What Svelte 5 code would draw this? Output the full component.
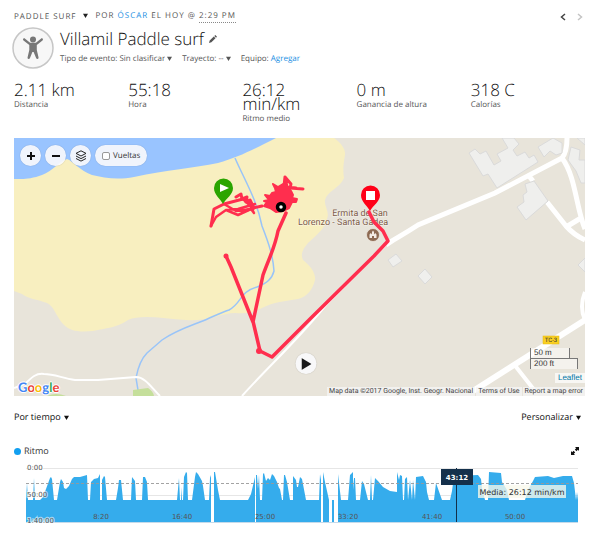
<script>
  const metrics = [
    { value: '2.11 km', label: 'Distancia' },
    { value: '55:18', label: 'Hora' },
    { value: '26:12 min/km', label: 'Ritmo medio' },
    { value: '0 m', label: 'Ganancia de altura' },
    { value: '318 C', label: 'Calorías' }
  ];
  const logo = [
    ['G', '#4285f4'], ['o', '#ea4335'], ['o', '#fbbc05'],
    ['g', '#4285f4'], ['l', '#34a853'], ['e', '#ea4335']
  ];
  const times = [
    ['8:20', 101], ['16:40', 182], ['25:00', 265],
    ['33:20', 348], ['41:40', 432], ['50:00', 515]
  ];
  const paces = [['0:00', 470], ['50:00', 497], ['1:40:00', 523]];

  // Pace samples as x,y pairs, one polygon for each stretch without a pause
  const stretches = [
    '26,500 27,483 28,500 33,500 34,478 35,500 40,500 43,497 46,489 50,478 51,477 52,479 54,500 57,500 60,482 61,479 63,482 64,488 66,489 69,486 72,479 74,477 80,477 87,475 88,500 90,500 91,482 94,479 98,478 100,474 100,500 102,500 102,480 104,476 105,477 107,500 116,500 118,488 119,480 121,480 123,500 131,500 132,477 135,481 136,500 142,500 143,477 145,477 147,482 148,500 177,500 179,478 180,500 181,500 181,487 182,500 183,500 184,477 186,472 187,473 188,500 192,500 195,477 196,472 198,474 202,481 203,486 205,500 209,500 210,478 211,475',
    '214,472 215,472 218,490 220,500 248,500 251,494 255,477',
    '256,475 257,475 258,489 259,475 260,500 262,500 263,474 264,473 266,481 268,478 270,480 272,474 274,476 277,482 279,488 280,489 282,500 283,500 284,475 285,475 287,482 290,500 293,500 293,476 296,480 297,487 298,487 300,477 302,479 306,500 319,500 320,474 321,480',
    '323,472 325,482 329,500',
    '332,500 334,500',
    '338,474 341,500 348,500 350,475 353,472 353,490 354,478 355,478 356,500 360,500 362,481 364,484 368,500 370,500 371,475 372,500 373,500 375,478 378,481 383,487 390,491 397,492 397,472 399,480 400,475 402,476 403,500 404,500 405,479 407,477 408,500 410,480 412,500 413,480 415,500 416,477 423,476 426,482 427,492 429,500 434,500 436,483 442,500 450,500 452,491 454,476 478,475 481,479 482,488 485,500 488,500 489,472 501,473 502,482 507,490 509,500 525,500 528,490 533,481 535,477 548,476 554,478 563,476 572,476 574,483 576,500 577,492 578,500'
  ].map((points) => {
    const list = points.split(' ');
    const first = list[0].split(',')[0];
    const last = list[list.length - 1].split(',')[0];
    return `${first},522 ${points} ${last},522`;
  });
</script>

{#snippet caret()}
  <svg class="caret" viewBox="0 0 6 6" aria-hidden="true"><path d="M0 1h6L3 6z" /></svg>
{/snippet}

<main>
  <div class="topline">
    <button class="sport">Paddle surf {@render caret()}</button>
    <span>por <a href="#oscar">Óscar</a> el hoy @ <button class="time">2:29 PM</button></span>
    <nav>
      <button aria-label="Anterior"><svg viewBox="0 0 6 8"><path d="M5 1 1.500 4 5 7" /></svg></button>
      <button class="off" aria-label="Siguiente"><svg viewBox="0 0 6 8"><path d="M1 1 4.500 4 1 7" /></svg></button>
    </nav>
  </div>

  <header>
    <svg class="avatar" viewBox="0 0 42 42" aria-hidden="true">
      <circle cx="21" cy="21" r="20" fill="#f7f7f7" stroke="#c6c6c6" stroke-width="1.500" />
      <g fill="#777">
        <circle cx="21" cy="12.500" r="3" />
        <path d="M11.300 11.800c.5-.7 1.300-.5 1.800-.1l5 4h5.800l5-4c.5-.4 1.300-.6 1.800.1s.2 1.300-.2 1.700L24.800 18v5l1.700 7.200c.2.900-.2 1.700-.9 1.800s-1.200-.3-1.500-1L21.600 25h-1.200L18 31c-.3.700-.8 1.100-1.500 1s-1.100-.9-.9-1.800l1.700-7.200v-5l-5.800-4.500c-.5-.4-.7-1-.2-1.700z" />
      </g>
    </svg>
    <div>
      <h1>
        Villamil Paddle surf
        <button aria-label="Editar nombre">
          <svg class="pencil" viewBox="0 0 8 8"><path d="M0 8 .7 5.600 4.800 1.500 6.500 3.200 2.400 7.300zM5.300 1 6.300 0 8 1.700 7 2.700z" /></svg>
        </button>
      </h1>
      <div class="details">
        <label>Tipo de evento: <select><option>Sin clasificar</option></select>{@render caret()}</label>
        <label>Trayecto: <select><option>--</option></select>{@render caret()}</label>
        <span>Equipo: <a href="#equipo">Agregar</a></span>
      </div>
    </div>
  </header>

  <dl class="metrics">
    {#each metrics as m}
      <div><dd>{m.value}</dd><dt>{m.label}</dt></div>
    {/each}
  </dl>

  <section class="map" aria-label="Mapa">
    <svg class="tiles" viewBox="14 138 571 258" preserveAspectRatio="xMidYMid slice">
      <rect x="14" y="138" width="571" height="258" fill="#e8e4da" />
      <path fill="#f8efc0" d="M14 138H334C340 142 346 149 345 155C343 166 343 172 344 178C340 188 327 191 325 200C324 206 330 212 327 219C325 228 318 234 308 243C301 251 301 256 303 260C311 266 316 274 315 280C313 289 307 297 298 299C285 301 274 302 262 308C253 313 246 314 235 313C222 313 205 322 186 320C165 319 142 314 128 320C116 328 106 328 93 331C80 332 71 332 63 324C56 316 54 306 47 303C36 299 29 299 22 294L14 291Z" />
      <path fill="#99c4ff" d="M14 138H276C254 149 239 157 218 163C194 168 167 170 134 177C118 180 104 178 92 175C79 170 73 161 67 159C58 162 53 171 42 175C34 178 26 179 22 179L14 179Z" />
      <path fill="none" stroke="#99c4f8" stroke-width="1.500" d="M235 158C245 181 257 200 262 226C269 244 273 256 274 271C272 279 267 283 257 287C239 292 242 303 229 310C219 313 211 318 200 322C187 327 175 331 162 340L147 353C139 361 137 373 136 378L139 396" />
      <path fill="#c5df9b" d="M133 390 148 388Q153 391 154 396H133zM47 396Q56 392 66 396z" />
      <g fill="none" stroke="#fff">
        <path stroke-width="2" d="M14 388 25 384C32 377 36 373 44 374C54 374 62 378 75 380H98L136 377C145 377 151 387 160 396" />
        <path stroke-width="2" d="M242 396C266 369 296 342 326 305L386 245" />
        <path stroke-width="5" d="M386 245C394 239 398 238 418 225L495 193 562 158Q567 152 567 138M562 158C576 177 576 208 585 229M529 176 533 181M547 202 566 226Q574 235 585 240M566 227 581 218" />
        <path stroke-width="6" d="M473 391 585 320" />
        <path stroke-width="4" d="M513 363 535 391M585 292Q579 307 585 320" />
      </g>
      <g fill="#efefed" stroke="#dadada" stroke-width="1">
        <path d="M469 153 475 149 480 154 486 151 494 165 501 161 497 154 508 148 502 138H514L519 144 513 150 517 156 525 152 529 158 534 155 538 162 497 188 488 174 483 176z" />
        <path d="M538 147 553 138 562 143V153L556 155 550 151 544 157z" />
        <path d="M571 147 580 150 579 160H585V183H581L576 171 568 160zM577 138H585V145z" />
        <path d="M525 184 534 181 548 201 526 220 517 207 524 202 523 195 527 192z" />
        <path d="M418 276 425 269 432 277 425 284zM388 260 396 254 402 261 393 267zM578 265 585 258V272z" />
      </g>
      <g class="place" text-anchor="middle">
        <text x="360" y="216">Ermita de San</text>
        <text x="343" y="225">Lorenzo - Santa Gadea</text>
      </g>
      <circle cx="373" cy="235" r="6.500" fill="#8d6a52" stroke="#efe8e0" stroke-width="0.800" />
      <path fill="#f4ece4" d="M369.500 238v-3.500l1.300-1.500 1.200 1.500V232l1-1.500 1 1.500v2.500l1.200-1.500 1.300 1.500v3.500h-2.500v-2h-2v2z" />
      <g fill="none" stroke="#ff2e4e" stroke-width="3.500" stroke-linejoin="round" stroke-linecap="round">
        <path d="M369 212 374 222 383 231 388 241 374 256 311 318 280 349 272 357 260 351" />
        <path d="M260 351 252 317M226 256 231 267 253 322 263 275C270 256 275 247 278 231L286 213" />
        <path d="M211 226 214 209 224 204 243 199 253 208 262 206" stroke-width="3" />
        <path d="M211 226 216 217 226 210 238 209 255 204M224 204 236 211 253 209M226 210 238 215 251 209 254 213 247 199" stroke-width="2.500" />
        <path d="M236 197 241 194 242 199 247 197 246 202 250 200 254 208 247 210" stroke-width="3" />
        <path d="M284 186 285 177 291 184 290 188 303 189M285 177 287 187 296 188" stroke-width="3" />
      </g>
      <path fill="#ff2e4e" stroke="#ff2e4e" stroke-width="2" stroke-linejoin="round" d="M273 184 278 187 283 184 289 188 291 191 293 195 292 198 297 199 296 202 292 202 289 208 283 211 276 212 270 208 264 206 267 202 264 201 269 200 265 195 270 196 272 193 276 192 275 188z" />
      <circle cx="226" cy="256" r="2.500" fill="#ff2e4e" />
      <circle cx="259" cy="351" r="3" fill="#ff2e4e" />
      <circle cx="281" cy="207" r="3.500" fill="#fff" stroke="#000" stroke-width="3.500" />
      <path fill="#2ba500" d="M223 204C220 198 214 195 214 188A9.500 9.500 0 0 1 233 188C233 195 226 198 223 204z" />
      <path fill="#fff" d="M220 184v8l9-4z" />
      <path fill="#ff0018" d="M370 211C367 205 361 202 361 195A9.500 9.500 0 0 1 380 195C380 202 373 205 370 211z" />
      <path fill="#fff" d="M366 191h9v9h-9z" />
      <rect x="543" y="336" width="16" height="8" fill="#f9cf22" stroke="#e5b90c" stroke-width="0.500" />
      <text class="road" x="551" y="342" text-anchor="middle">TC-3</text>
    </svg>

    <div class="tools">
      <button aria-label="Acercar"><svg viewBox="0 0 10 10"><path d="M5 1v8M1 5h8" stroke="#111" stroke-width="2" /></svg></button>
      <button aria-label="Alejar"><svg viewBox="0 0 10 10"><path d="M1 5h8" stroke="#111" stroke-width="2" /></svg></button>
      <button aria-label="Capas"><svg class="layers" viewBox="0 0 12 12" fill="none" stroke="#222" stroke-width="1"><path d="M6 .8 11 3.400 6 6 1 3.400zM1 6l5 2.600L11 6M1 8.500l5 2.600 5-2.600" /></svg></button>
      <label><input type="checkbox" />Vueltas</label>
    </div>
    <button class="play" aria-label="Reproducir"><svg viewBox="0 0 10 12"><path d="M0 0 10 6 0 12z" fill="#1a1a1a" /></svg></button>
    <span class="google">{#each logo as [letter, color]}<span style:color>{letter}</span>{/each}</span>
    <div class="corner">
      <div class="scale"><span>50 m</span><span>200 ft</span></div>
      <a class="leaflet" href="#leaflet">Leaflet</a>
      <div class="credits">
        <span>Map data ©2017 Google, Inst. Geogr. Nacional</span>
        <a href="#terms">Terms of Use</a>
        <a href="#report">Report a map error</a>
      </div>
    </div>
  </section>

  <div class="options">
    <label><select aria-label="Eje del gráfico"><option>Por tiempo</option></select>{@render caret()}</label>
    <button>Personalizar{@render caret()}</button>
  </div>

  <section>
    <div class="legend">
      <h2>Ritmo</h2>
      <button aria-label="Ampliar gráfico">
        <svg viewBox="0 0 8 8"><path d="M4 0h4v4L6.800 2.800 5.400 4.200 3.800 2.600 5.200 1.200zM4 8H0V4l1.200 1.200 1.400-1.400 1.600 1.600L2.800 6.800z" /></svg>
      </button>
    </div>
    <svg class="chart" viewBox="14 464 571 64" role="img" aria-label="Ritmo por tiempo">
      <path d="M26 468.500H578M26 495.500H578" stroke="#e6e6e6" />
      <g fill="#35acec">
        {#each stretches as points}<polygon {points} />{/each}
      </g>
      <path d="M26 522.500H578" stroke="#c5daea" />
      <path d="M26 483.500H578" stroke="#999" stroke-opacity="0.900" stroke-dasharray="3 2" />
      <g class="paces">
        {#each paces as [text, y]}<text x="27" {y}>{text}</text>{/each}
      </g>
      <g class="times">
        {#each times as [text, x]}<text {x} y="519">{text}</text>{/each}
      </g>
      <path d="M456.500 468V522" stroke="#12304a" />
      <rect x="441" y="469" width="32" height="16" fill="#14304b" />
      <text class="now" x="457" y="480">43:12</text>
      <rect x="478" y="485" width="88" height="13" fill="#f8f9ec" fill-opacity="0.780" />
      <text class="mean" x="522" y="495">Media: 26:12 min/km</text>
    </svg>
  </section>
</main>

<style>
  :global(body) { margin: 0; background: #fff; }
  main { padding: 10px 15px 12px 14px; font: 8px/12px "Open Sans", "Noto Sans", sans-serif; color: #555; text-rendering: geometricPrecision; }
  button, select { font: inherit; color: inherit; letter-spacing: inherit; text-transform: inherit; text-rendering: inherit; background: none; border: 0; padding: 0; margin: 0; }
  select { appearance: none; field-sizing: content; }
  a { color: #1a8fe3; text-decoration: none; }
  svg { display: block; }
  .caret { display: inline-block; width: 5px; height: 5px; margin-left: 3px; fill: currentColor; }

  .topline { display: flex; align-items: center; gap: 8px; letter-spacing: 1px; text-transform: uppercase; }
  .topline .caret { vertical-align: 1px; fill: #222; }
  .time { border-bottom: 1px dotted #888; }
  nav { display: flex; gap: 11px; margin: 0 2px 0 auto; }
  nav svg { width: 6px; height: 8px; fill: none; stroke: #444; stroke-width: 1.500; }
  nav .off svg { stroke: #c4c4c4; }

  header { display: flex; gap: 6px; margin-top: 4px; }
  .avatar { width: 42px; height: 42px; flex: none; margin-left: -2px; }
  h1 { display: flex; align-items: center; gap: 5px; margin: 0; font-size: 17px; line-height: 24px; font-weight: 300; color: #111; }
  .pencil { width: 8px; height: 8px; fill: #555; }
  .details { display: flex; gap: 10px; margin-top: 2px; }
  .details .caret { margin-left: 2px; }

  .metrics { display: grid; grid-template-columns: repeat(5, 1fr); margin: 14px 0 13px; }
  .metrics div { display: flex; flex-direction: column; padding-right: 20px; }
  dd { margin: 0 0 2px; font-size: 17px; line-height: 14px; font-weight: 300; color: #111; }

  .map { position: relative; height: 258px; overflow: hidden; }
  .tiles { width: 100%; height: 100%; }
  .place { font: 9px Roboto, sans-serif; fill: #7d5b47; stroke: #fff; stroke-width: 1; stroke-opacity: 0.600; paint-order: stroke; }
  .road { font: 6px Roboto, sans-serif; fill: #333; }
  .tools { position: absolute; top: 7px; left: 6px; display: flex; gap: 4px; }
  .tools button, .tools label, .play { display: flex; align-items: center; justify-content: center; height: 21px; border-radius: 11px; background: rgba(250, 250, 252, 0.900); box-shadow: 0 0 1px rgba(0, 0, 0, 0.300); }
  .tools button, .play { width: 21px; }
  .tools svg { width: 10px; height: 10px; }
  .tools .layers { width: 12px; height: 12px; }
  .tools label { gap: 3px; padding: 0 7px; color: #333; }
  input { appearance: none; width: 8px; height: 8px; margin: 0; border: 1px solid #999; border-radius: 2px; background: #fff; }
  .play { position: absolute; left: 50%; bottom: 22px; transform: translateX(-50%); margin-left: 6px; }
  .play svg { width: 10px; height: 12px; margin-left: 2px; }
  .google { position: absolute; left: 4px; bottom: 0; font: 700 13px/18px Lato, sans-serif; text-shadow: 1px 0 #fff, -1px 0 #fff, 0 1px #fff, 0 -1px #fff; }
  .corner { position: absolute; right: 0; bottom: 0; display: flex; flex-direction: column; align-items: flex-end; font: 8px/10px "Liberation Sans", sans-serif; color: #333; }
  .scale { display: flex; flex-direction: column; align-items: flex-start; margin: 0 7px 4px; }
  .scale span { box-sizing: border-box; width: 40px; height: 10px; padding-left: 3px; border: 1px solid #777; border-bottom: 0; border-top: 0; background: rgba(255, 255, 255, 0.500); }
  .scale span + span { width: 48px; height: 11px; border-top: 1px solid #777; }
  .leaflet { padding: 0 3px; margin-bottom: 4px; background: rgba(255, 255, 255, 0.700); color: #0078a8; }
  .credits { display: flex; gap: 1px; font: 7px/9px Roboto, sans-serif; }
  .credits > * { padding: 0 2px; background: rgba(245, 245, 245, 0.750); color: #444; }

  .options { display: flex; justify-content: space-between; padding: 15px 4px 0 0; font-size: 9px; color: #111; }
  .legend { display: flex; align-items: center; justify-content: space-between; padding: 22px 6px 0 0; }
  h2 { display: flex; align-items: center; gap: 3px; margin: 0; font-size: 9px; font-weight: 400; color: #333; }
  h2::before { content: ""; width: 7px; height: 7px; border-radius: 50%; background: #129ff0; }
  .legend svg { width: 8px; height: 8px; fill: #111; }
  .chart { width: 100%; height: auto; margin-top: 7px; font: 7px "DejaVu Sans", sans-serif; fill: #555; }
  .paces { stroke: #fff; stroke-width: 2; stroke-opacity: 0.600; paint-order: stroke; }
  .times, .now, .mean { text-anchor: middle; }
  .now { font-weight: 700; font-size: 7px; fill: #fff; }
  .mean { font-size: 8px; fill: #333; }
</style>
